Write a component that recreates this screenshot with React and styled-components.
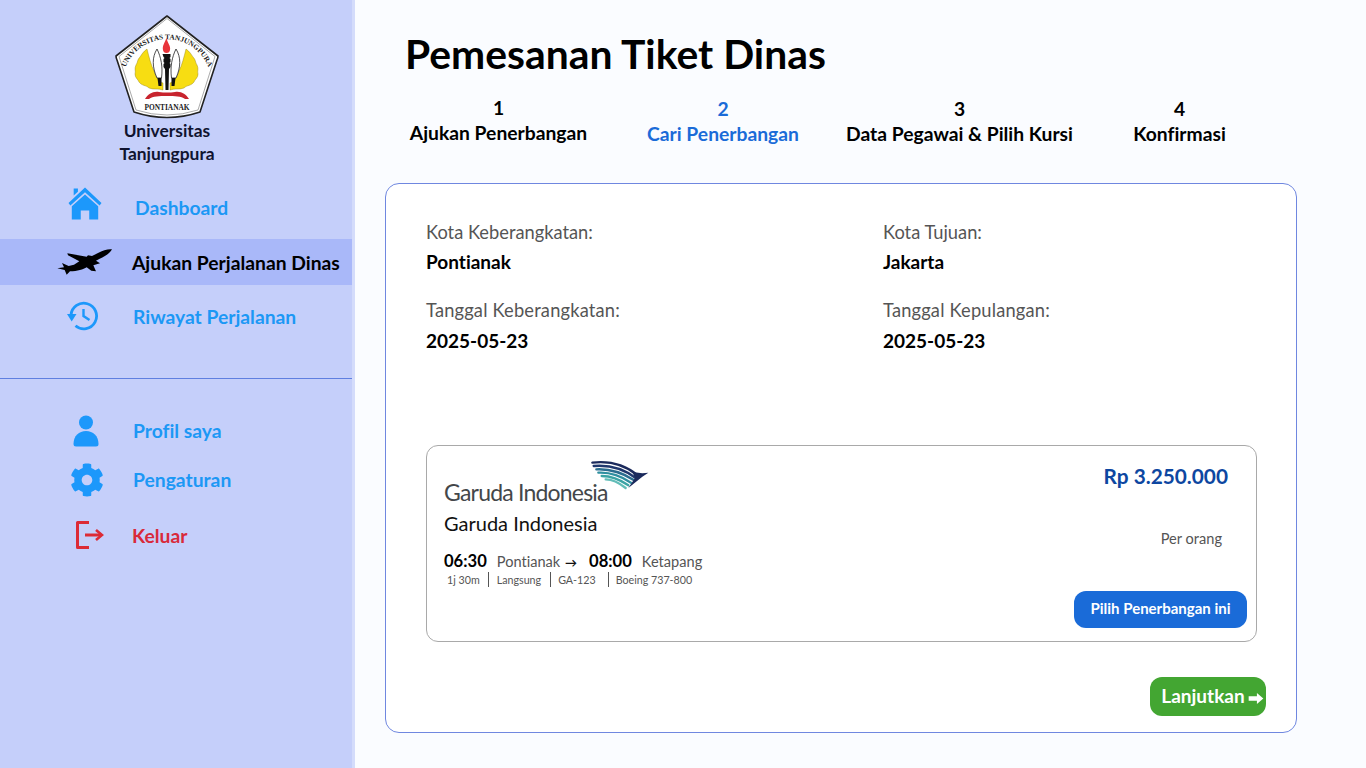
import React from 'react'
import styled, { createGlobalStyle } from 'styled-components'
import { FaCog } from 'react-icons/fa'

const GlobalStyle = createGlobalStyle`
  * { box-sizing: border-box; }
  html, body { margin: 0; height: 100%; }
  body {
    font-family: "Lato", "Noto Sans", sans-serif;
    font-variant-ligatures: none;
    background: #fafcff;
    color: #000;
    overflow: hidden;
  }
`

const wing = 'M32 34 C28 37 27 39 25 42 C22 45 23 47 21 50 C19 54 21 56 20 59 C20 63 23 64 24 67 C27 71 31 70 34 73 C39 75 43 73 48 75 L48 68 C43 66 41 62 39 56 C36 50 34 42 32 34 Z'
const kris = 'M42 34 C37 42 37 52 42 63 L46.5 63 C48 52 46 42 42 34 Z'

const Logo = () => (
  <svg width="104" height="105" viewBox="0 0 104 105">
    <path d="M52 1 L103 41 Q103 43 102 45 L85 97 Q52 108 19 97 L2 45 Q1 43 1 41 Z" fill="#fff" stroke="#222" strokeWidth="1.6" strokeLinejoin="round" />
    <path d="M52 3.5 L100 41.5 L83 95 Q52 105 21 95 L4 41.5 Z" fill="none" stroke="#555" strokeWidth="0.5" />
    <defs>
      <path id="logoArc" d="M8 62 A44.5 44.5 0 0 1 96 62" />
    </defs>
    <text fontFamily="Liberation Serif" fontWeight="700" fontSize="7.3" fill="#222">
      <textPath href="#logoArc" startOffset="50%" textAnchor="middle">UNIVERSITAS TANJUNGPURA</textPath>
    </text>
    <path d={wing} fill="#f7dd12" stroke="#8a7a10" strokeWidth="0.4" />
    <path d={wing} fill="#f7dd12" stroke="#8a7a10" strokeWidth="0.4" transform="matrix(-1 0 0 1 103 0)" />
    <path d={kris} fill="#fff" stroke="#222" strokeWidth="0.8" />
    <path d={kris} fill="#fff" stroke="#222" strokeWidth="0.8" transform="matrix(-1 0 0 1 103 0)" />
    <path d="M42.5 63 h4 v8 h-3 Z M56.5 63 h4 l-1 8 h-3 Z" fill="#111" />
    <path d="M51.5 23 C49.5 28 47 31 48 35 Q48.5 38 51.5 38 Q54.5 38 55 35 C56 31 52.5 28 51.5 23 Z" fill="#e8343a" />
    <path d="M47.5 39 h8 v3 l-1 1 l1 1 v3 l-1 1 l1 1 v3 l-1.5 2 l-0.5 21 h-3 l-0.5 -21 l-1.5 -2 v-3 l1 -1 l-1 -1 v-3 l1 -1 l-1 -1 Z" fill="#111" />
    <path d="M30 84 C33 79 38 76 44 77 Q52 78 60 77 C66 76 71 79 74 84 L70 84 C66 81 60 81 52 81 C44 81 38 81 34 84 Z" fill="#c8242e" />
    <text x="52" y="95" textAnchor="middle" fontFamily="Liberation Serif" fontWeight="700" fontSize="7.4" fill="#222">PONTIANAK</text>
  </svg>
)

const HomeIcon = () => (
  <svg width="34" height="33" viewBox="0 0 36 35" fill="#1c98fb">
    <path d="M6 1.5 h4.5 v3.5 L6 9 Z" />
    <path d="M18 0.5 L35.5 17 L33.5 19.5 L18 5.5 L2.5 19.5 L0.5 17 Z" />
    <path d="M18 8 L32 20.5 V34.5 H22.5 V25 H13.5 V34.5 H4 V20.5 Z" />
  </svg>
)

const PlaneIcon = () => (
  <svg width="70" height="44" viewBox="0 0 210 132" fill="#000">
    <path d="M186 28 C176 26 158 31 144 39 L126 48 L114 46 L110 50 L52 40 L54 46 L88 64 L72 74 L56 78 L36 69 L42 82 L22 85 L44 90 L50 104 L60 94 C82 94 100 88 110 82 L124 92 L138 94 L130 76 L150 70 L138 62 C158 52 180 42 186 28 Z" />
  </svg>
)

const HistoryIcon = () => (
  <svg width="32" height="30" viewBox="0 0 32 30" fill="none" stroke="#1c98fb" strokeWidth="2.8">
    <path d="M4 14 A12.8 12.8 0 1 1 8.5 24.8" />
    <path d="M0 13 H9.5 L4.7 20.5 Z" fill="#1c98fb" stroke="none" />
    <path d="M16.5 8 V15 L22.5 19" strokeWidth="2.4" />
  </svg>
)

const UserIcon = () => (
  <svg width="26" height="32" viewBox="0 0 26 32" fill="#1c98fb">
    <circle cx="13" cy="7.5" r="7" />
    <path d="M0.5 29 C0.5 21 6 16 13 16 C20 16 25.5 21 25.5 29 Q25.5 31.5 23 31.5 H3 Q0.5 31.5 0.5 29 Z" />
  </svg>
)

const ExitIcon = () => (
  <svg width="28" height="28" viewBox="0 0 28 28" fill="none" stroke="#dc2b36" strokeWidth="3">
    <path d="M13 1.5 H1.5 V26.5 H13" strokeLinejoin="round" />
    <path d="M9 14 H25" />
    <path d="M20 9 L26 14 L20 19" strokeWidth="2.6" />
  </svg>
)

const GarudaLogo = () => (
  <BrandLogo>
    <BrandWord>Garuda Indonesia</BrandWord>
    <BirdMark width="70" height="40" viewBox="0 0 210 120" fill="none" strokeLinecap="round">
      <path d="M22 14 C75 8 122 22 158 52" stroke="#1b2a5c" strokeWidth="7" />
      <path d="M26 24 C75 20 118 34 152 60" stroke="#20386e" strokeWidth="7" />
      <path d="M34 34 C75 32 112 44 146 66" stroke="#2b6d8f" strokeWidth="7" />
      <path d="M40 44 C76 42 108 54 138 74" stroke="#2f8fa0" strokeWidth="7" />
      <path d="M50 54 C78 54 104 64 130 82" stroke="#3ba4a5" strokeWidth="7" />
      <path d="M62 64 C82 64 102 74 122 90" stroke="#62bdb8" strokeWidth="7" />
      <path d="M142 42 L172 46 L190 44 L172 56 L130 90 L150 60 Z" fill="#1b2a5c" />
    </BirdMark>
  </BrandLogo>
)

const ArrowIcon = () => (
  <ArrowMark width="16" height="11" viewBox="0 0 16 12" fill="#fff">
    <path d="M0 3.5 H9 V0 L16 6 L9 12 V8.5 H0 Z" />
  </ArrowMark>
)

const mainNav = [
  { label: 'Dashboard', icon: <HomeIcon />, left: 68, gap: 33, height: 58, bottom: 6, up: 8 },
  { label: 'Ajukan Perjalanan Dinas', icon: <PlaneIcon />, left: 50, gap: 12, height: 46, active: true },
  { label: 'Riwayat Perjalanan', icon: <HistoryIcon />, left: 67, gap: 34, height: 62 },
]

const subNav = [
  { label: 'Profil saya', icon: <UserIcon />, left: 73, gap: 34, height: 49 },
  { label: 'Pengaturan', icon: <FaCog size={34} color="#1c98fb" />, left: 70, gap: 29, height: 49 },
  { label: 'Keluar', icon: <ExitIcon />, left: 76, gap: 28, height: 62, danger: true },
]

const steps = [
  { num: '1', label: 'Ajukan Penerbangan', width: 177, offset: 0, drop: 0 },
  { num: '2', label: 'Cari Penerbangan', width: 152, offset: 60, drop: 1, current: true },
  { num: '3', label: 'Data Pegawai & Pilih Kursi', width: 229, offset: 46, drop: 1 },
  { num: '4', label: 'Konfirmasi', width: 91, offset: 60, drop: 1 },
]

const metas = [
  { text: '1j 30m', before: 0, after: 0 },
  { text: 'Langsung', before: 8, after: 8 },
  { text: 'GA-123', before: 9, after: 7 },
  { text: 'Boeing 737-800', before: 12, after: 7 },
]

const App = () => {
  return (
    <Page>
      <GlobalStyle />
      <Sidebar>
        <Brand>
          <Logo />
          <BrandName>Universitas<br />Tanjungpura</BrandName>
        </Brand>
        <NavGroup>
          {mainNav.map((item) => (
            <NavRow key={item.label} $left={item.left} $gap={item.gap} $height={item.height} $bottom={item.bottom} $active={item.active}>
              <IconSlot $up={item.up}>{item.icon}</IconSlot>
              <NavLabel $active={item.active}>{item.label}</NavLabel>
            </NavRow>
          ))}
        </NavGroup>
        <Divider />
        <SubGroup>
          {subNav.map((item) => (
            <NavRow key={item.label} $left={item.left} $gap={item.gap} $height={item.height}>
              <IconSlot>{item.icon}</IconSlot>
              <NavLabel $danger={item.danger}>{item.label}</NavLabel>
            </NavRow>
          ))}
        </SubGroup>
      </Sidebar>
      <Strip />
      <Main>
        <Title>Pemesanan Tiket Dinas</Title>
        <Steps>
          {steps.map((s) => (
            <Step key={s.num} $width={s.width} $offset={s.offset} $drop={s.drop} $current={s.current}>
              <span>{s.num}</span>
              <span>{s.label}</span>
            </Step>
          ))}
        </Steps>
        <Panel>
          <InfoGrid>
            <Info><InfoLabel>Kota Keberangkatan:</InfoLabel><InfoValue>Pontianak</InfoValue></Info>
            <Info><InfoLabel>Kota Tujuan:</InfoLabel><InfoValue>Jakarta</InfoValue></Info>
            <Info $gap={7}><InfoLabel $wide>Tanggal Keberangkatan:</InfoLabel><InfoValue>2025-05-23</InfoValue></Info>
            <Info $gap={7}><InfoLabel $wide>Tanggal Kepulangan:</InfoLabel><InfoValue>2025-05-23</InfoValue></Info>
          </InfoGrid>
          <FlightCard>
            <FlightLeft>
              <GarudaLogo />
              <AirlineName>Garuda Indonesia</AirlineName>
              <TimeRow>
                <Time>06:30</Time>
                <City>Pontianak <RouteArrow>→</RouteArrow></City>
                <Time>08:00</Time>
                <City>Ketapang</City>
              </TimeRow>
              <MetaRow>
                {metas.map((m) => (
                  <Meta key={m.text} $before={m.before} $after={m.after}>{m.text}</Meta>
                ))}
              </MetaRow>
            </FlightLeft>
            <FlightRight>
              <Price>Rp 3.250.000</Price>
              <PerPerson>Per orang</PerPerson>
              <SelectButton>Pilih Penerbangan ini</SelectButton>
            </FlightRight>
          </FlightCard>
          <PanelFooter>
            <NextButton>Lanjutkan<ArrowIcon /></NextButton>
          </PanelFooter>
        </Panel>
      </Main>
    </Page>
  )
}

const Page = styled.div`
  display: flex;
  height: 768px;
  width: 1366px;
  overflow: hidden;
`

const Sidebar = styled.aside`
  width: 352px;
  flex: none;
  background: #c5cffa;
`

const Strip = styled.div`
  width: 3px;
  flex: none;
  background: #d4dcfb;
`

const Brand = styled.div`
  display: flex;
  flex-direction: column;
  align-items: center;
  padding: 15px 0 0 0;
  margin-left: -18px;
`

const BrandName = styled.div`
  font-size: 17.4px;
  font-weight: 700;
  line-height: 23px;
  text-align: center;
  color: #101430;
  margin-top: -1px;
`

const NavGroup = styled.nav`
  margin-top: 16px;
`

const SubGroup = styled.nav`
  margin-top: 27px;
`

const NavRow = styled.div`
  display: flex;
  align-items: center;
  height: ${(p) => p.$height}px;
  padding-left: ${(p) => p.$left}px;
  padding-bottom: ${(p) => p.$bottom || 0}px;
  gap: ${(p) => p.$gap}px;
  background: ${(p) => (p.$active ? '#a9b8f9' : 'transparent')};
`

const IconSlot = styled.span`
  display: flex;
  margin-bottom: ${(p) => p.$up || 0}px;
`

const NavLabel = styled.span`
  font-size: 19.3px;
  font-weight: 700;
  color: ${(p) => (p.$active ? '#000' : p.$danger ? '#d9293a' : '#1c98f5')};
`

const Divider = styled.div`
  height: 1px;
  margin-top: 31px;
  background: #5f7fe0;
`

const Main = styled.main`
  flex: 1;
  padding: 29px 69px 0 30px;
`

const Title = styled.h1`
  margin: 0 0 0 20px;
  font-size: 40.8px;
  line-height: 50px;
  font-weight: 700;
  white-space: nowrap;
`

const Steps = styled.div`
  display: flex;
  margin: 16px 0 0 25px;
`

const Step = styled.div`
  display: flex;
  flex-direction: column;
  align-items: center;
  flex: none;
  width: ${(p) => p.$width}px;
  margin-left: ${(p) => p.$offset}px;
  padding-top: ${(p) => p.$drop}px;
  height: 50px;
  font-size: 19.3px;
  font-weight: 700;
  line-height: 25px;
  white-space: nowrap;
  color: ${(p) => (p.$current ? '#1a6bd8' : '#000')};
`

const Panel = styled.section`
  margin-top: 38px;
  width: 912px;
  height: 550px;
  border: 1px solid #6f87e0;
  border-radius: 14px;
  background: #fff;
  padding: 36px 40px 0;
`

const InfoGrid = styled.div`
  display: grid;
  grid-template-columns: 457px 1fr;
  align-content: start;
  row-gap: 24px;
  height: 225px;
`

const Info = styled.div`
  display: flex;
  flex-direction: column;
  gap: ${(p) => p.$gap || 6}px;
`

const InfoLabel = styled.span`
  font-size: 18.3px;
  line-height: 24px;
  letter-spacing: ${(p) => (p.$wide ? '0.18px' : '0')};
  color: #555;
`

const InfoValue = styled.span`
  font-size: 19px;
  font-weight: 700;
  line-height: 24px;
`

const FlightCard = styled.div`
  display: flex;
  justify-content: space-between;
  width: 831px;
  height: 197px;
  border: 1px solid #a9a9a9;
  border-radius: 12px;
  padding: 16px 9px 13px 17px;
  background: #fff;
`

const FlightLeft = styled.div`
  display: flex;
  flex-direction: column;
`

const BrandLogo = styled.div`
  display: flex;
  align-items: flex-start;
  height: 42px;
`

const BrandWord = styled.span`
  font-size: 23px;
  line-height: 26px;
  letter-spacing: -0.8px;
  color: #44474a;
  margin-top: 17px;
  white-space: nowrap;
`

const BirdMark = styled.svg`
  flex: none;
  margin: -4px 0 0 -23px;
`

const AirlineName = styled.div`
  font-size: 20px;
  line-height: 26px;
  margin-top: 6px;
  color: #111;
`

const TimeRow = styled.div`
  display: flex;
  align-items: baseline;
  gap: 10px;
  margin-top: 15px;
`

const Time = styled.span`
  font-size: 16.6px;
  font-weight: 700;
`

const City = styled.span`
  font-size: 14.6px;
  color: #555;
`

const RouteArrow = styled.span`
  font-size: 12px;
  font-weight: 700;
  color: #111;
  margin: 0 2px 0 1px;
`

const MetaRow = styled.div`
  display: flex;
  align-items: center;
  margin-top: 1px;
  padding-left: 3px;
`

const Meta = styled.span`
  font-size: 10.7px;
  line-height: 15px;
  color: #555;
  padding-left: ${(p) => p.$after}px;
  margin-left: ${(p) => p.$before}px;
  border-left: ${(p) => (p.$before ? '1px solid #555' : 'none')};
`

const FlightRight = styled.div`
  display: flex;
  flex-direction: column;
  align-items: flex-end;
`

const Price = styled.div`
  font-size: 20.8px;
  font-weight: 700;
  line-height: 30px;
  color: #0d47a1;
  margin: -1px 19px 0 0;
`

const PerPerson = styled.div`
  font-size: 14.6px;
  line-height: 20px;
  color: #555;
  margin: 38px 25px 0 0;
`

const SelectButton = styled.button`
  margin-top: 42px;
  width: 173px;
  height: 37px;
  border: none;
  border-radius: 12px;
  padding: 0 0 3px;
  background: #1a6bd8;
  color: #fff;
  font: 700 15px "Lato", "Noto Sans", sans-serif;
  font-variant-ligatures: none;
`

const PanelFooter = styled.div`
  display: flex;
  justify-content: flex-end;
  margin: 35px -10px 0 0;
`

const NextButton = styled.button`
  display: flex;
  align-items: center;
  justify-content: center;
  gap: 3px;
  width: 116px;
  height: 39px;
  border: none;
  border-radius: 12px;
  padding: 0 0 3px 9px;
  background: #43a632;
  color: #fff;
  font: 700 19px "Lato", "Noto Sans", sans-serif;
`

const ArrowMark = styled.svg`
  margin-top: 7px;
`

export default App
